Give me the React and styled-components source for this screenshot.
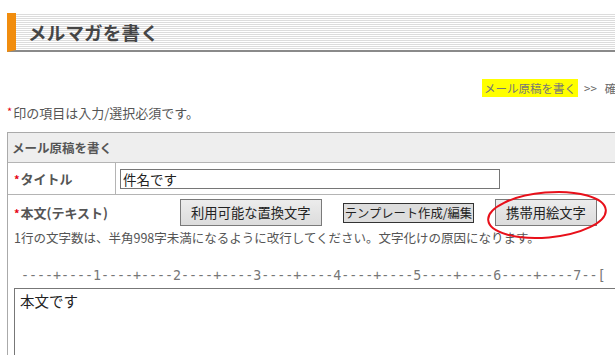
import React from 'react';
import styled, { createGlobalStyle } from 'styled-components';

const GlobalStyle = createGlobalStyle`
  html, body {
    margin: 0;
    padding: 0;
    overflow: hidden;
    background: #fff;
  }
  body {
    font-family: "Noto Sans CJK JP", "Noto Sans", sans-serif;
    color: #444;
  }
`;

const Page = styled.div`
  width: 740px;
  padding: 13px 0 0 7px;
`;

const PageTitle = styled.h1`
  display: flex;
  align-items: center;
  height: 37px;
  margin: 0;
  padding-left: 12px;
  border-left: 9px solid #f18d0e;
  border-bottom: 2px solid #8a8a8a;
  background: repeating-linear-gradient(to bottom, #fff 0 1px, #dcdcdc 1px 2px);
  font-size: 18.5px;
  font-weight: bold;
  color: #454545;
  letter-spacing: 0.2px;
`;

const Breadcrumb = styled.nav`
  display: flex;
  align-items: center;
  gap: 6px;
  margin: 27px 0 0 475px;
  font-size: 11.5px;
  line-height: 18px;
  color: #666;
  white-space: nowrap;
`;

const Crumb = styled.span`
  padding: 0 2px;
  background: ${p => (p.$current ? '#ffff00' : 'transparent')};
  color: ${p => (p.$current ? '#777' : '#666')};
`;

const Required = styled.p`
  margin: 5px 0 0;
  font-size: 13px;
  line-height: 18px;
  color: #555;
`;

const Mark = styled.span`
  color: #e60012;
  font-size: 11px;
  vertical-align: 2px;
  margin-right: 1px;
`;

const FormBox = styled.section`
  margin-top: 10px;
  border: 1px solid #aaa;
  border-right: none;
  border-bottom: none;
`;

const BoxHeader = styled.div`
  display: flex;
  align-items: center;
  height: 29px;
  padding-left: 4px;
  background: #eeeeee;
  border-bottom: 1px solid #b4b4b4;
  font-size: 12.5px;
  font-weight: bold;
  color: #555;
`;

const FieldRow = styled.div`
  display: grid;
  grid-template-columns: 107px 1fr;
  height: 31px;
  border-bottom: 1px solid #b4b4b4;
`;

const Label = styled.div`
  display: flex;
  align-items: center;
  padding-left: 6px;
  font-size: 13px;
  font-weight: bold;
  color: #555;
  white-space: nowrap;
  ${p => p.$wide && 'width: 151px; box-sizing: border-box;'}
`;

const Cell = styled.div`
  display: flex;
  align-items: center;
  padding-left: 4px;
  border-left: 1px solid #b4b4b4;
`;

const TextInput = styled.input`
  box-sizing: border-box;
  width: 380px;
  height: 20px;
  padding: 0 2px;
  border: 1px solid #767676;
  font-family: inherit;
  font-size: 13.5px;
  color: #222;
  outline: none;
`;

const BodyField = styled.div`
  padding: 4px 0 0;
`;

const ToolRow = styled.div`
  display: flex;
  align-items: center;
  gap: 21px;
`;

const Button = styled.button`
  box-sizing: border-box;
  height: ${p => (p.$flat ? '20px' : '27px')};
  padding: ${p => (p.$flat ? '0 1px' : '0 10px')};
  border: 1px solid ${p => (p.$flat ? '#333' : '#7a7a7a')};
  border-radius: 0;
  background: ${p => (p.$flat ? '#dddddd' : 'linear-gradient(#ececec, #dcdcdc)')};
  font-family: inherit;
  font-size: ${p => (p.$flat ? '12.3px' : '13.3px')};
  color: #222;
  white-space: nowrap;
  cursor: pointer;
`;

const Marked = styled.div`
  position: relative;
  display: flex;
`;

const Circle = styled.svg`
  position: absolute;
  left: -11px;
  top: -9px;
  width: 126px;
  height: 50px;
  overflow: visible;
  pointer-events: none;
`;

const Note = styled.p`
  margin: 4px 0 0 6px;
  font-size: 12.5px;
  line-height: 16px;
  color: #555;
  white-space: nowrap;
`;

const Ruler = styled.div`
  margin: 22px 0 0 13px;
  font-family: "DejaVu Sans Mono", "Liberation Mono", monospace;
  font-size: 13.3px;
  line-height: 16px;
  color: #777;
  white-space: pre;
`;

const BodyText = styled.textarea`
  display: block;
  box-sizing: border-box;
  width: 720px;
  height: 90px;
  margin: 4px 0 0 6px;
  padding: 3px 5px;
  border: 1px solid #777;
  font-family: inherit;
  font-size: 14.5px;
  line-height: 18px;
  color: #222;
  resize: none;
  outline: none;
`;

const ruler = '----+----1----+----2----+----3----+----4----+----5----+----6----+----7--[';

export default function App() {
  return (
    <>
      <GlobalStyle />
      <Page>
        <PageTitle>メルマガを書く</PageTitle>

        <Breadcrumb>
          <Crumb $current>メール原稿を書く</Crumb>
          <span>&gt;&gt;</span>
          <Crumb>確認画面</Crumb>
        </Breadcrumb>

        <Required><Mark>*</Mark>印の項目は入力/選択必須です。</Required>

        <FormBox>
          <BoxHeader>メール原稿を書く</BoxHeader>

          <FieldRow>
            <Label><Mark>*</Mark>タイトル</Label>
            <Cell>
              <TextInput defaultValue="件名です" />
            </Cell>
          </FieldRow>

          <BodyField>
            <ToolRow>
              <Label $wide><Mark>*</Mark>本文(テキスト)</Label>
              <Button>利用可能な置換文字</Button>
              <Button $flat>テンプレート作成/編集</Button>
              <Marked>
                <Button>携帯用絵文字</Button>
                <Circle viewBox="0 0 126 50">
                  <ellipse cx="63" cy="25" rx="59" ry="22.5" fill="none"
                    stroke="#e8101a" strokeWidth="2" transform="rotate(-5 63 25)" />
                </Circle>
              </Marked>
            </ToolRow>
            <Note>1行の文字数は、半角998字未満になるように改行してください。文字化けの原因になります。</Note>
            <Ruler>{ruler}</Ruler>
            <BodyText defaultValue="本文です" />
          </BodyField>
        </FormBox>
      </Page>
    </>
  );
}
